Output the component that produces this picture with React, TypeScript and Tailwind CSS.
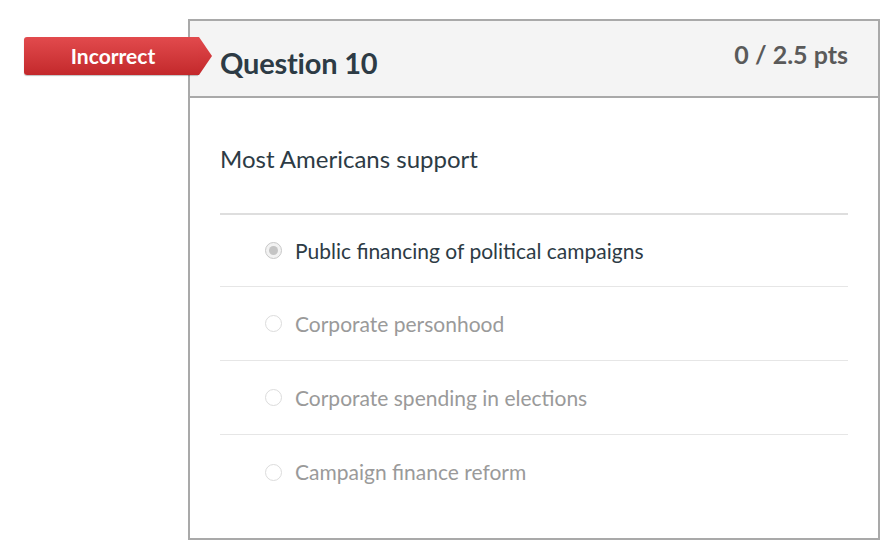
import React from 'react'

const answers = [
  { text: 'Public financing of political campaigns', selected: true },
  { text: 'Corporate personhood', selected: false },
  { text: 'Corporate spending in elections', selected: false },
  { text: 'Campaign finance reform', selected: false },
]

function Radio({ selected }: { selected: boolean }) {
  return (
    <span
      className={`w-[17px] h-[17px] rounded-full border flex items-center justify-center shrink-0 ${
        selected ? 'border-[#c8c8c8] bg-[#f2f2f2]' : 'border-[#dcdcdc] bg-white'
      }`}
    >
      {selected && <span className="w-[9px] h-[9px] rounded-full bg-[#c4c4c4]" />}
    </span>
  )
}

export default function App() {
  return (
    <div className="w-[880px] h-[540px] bg-white relative overflow-hidden" style={{ fontFamily: 'Lato, "Open Sans", sans-serif' }}>
      {/* Incorrect badge */}
      <div className="absolute left-[24px] top-[37px] flex h-[38px] z-10">
        <div className="w-[174px] h-full rounded-l-[3px] bg-gradient-to-b from-[#e24a4d] to-[#c3282b] text-white text-[21px] font-bold flex items-center justify-center pl-[4px] shadow-[0_1px_1px_rgba(0,0,0,0.25)]">
          Incorrect
        </div>
        <svg width="14" height="38" viewBox="0 0 14 38" className="block">
          <defs>
            <linearGradient id="bg" x1="0" y1="0" x2="0" y2="1">
              <stop offset="0" stopColor="#e24a4d" />
              <stop offset="1" stopColor="#c3282b" />
            </linearGradient>
          </defs>
          <polygon points="0,0 1,0 14,19 1,38 0,38" fill="url(#bg)" />
        </svg>
      </div>

      <div className="ml-[188px] mt-[19px] w-[692px] h-[521px] border-2 border-[#a9a9a9] flex flex-col">
        <div className="h-[77px] bg-[#f4f4f4] border-b-2 border-[#a9a9a9] flex justify-between px-[30px]">
          <h2 className="text-[29px] font-bold text-[#2d3b45] mt-[27px] leading-none tracking-[-0.2px]">Question 10</h2>
          <div className="text-[25px] font-bold text-[#5a5a5a] mt-[21px] leading-none">0 / 2.5 pts</div>
        </div>
        <div className="px-[30px]">
          <p className="text-[24px] text-[#2d3b45] mt-[49px] leading-none">Most Americans support</p>
          <div className="mt-[42px] border-t-2 border-[#dedede]">
            {answers.map((a, i) => (
              <div
                key={a.text}
                className={`flex items-center pl-[45px] gap-[13px] ${i === 0 ? 'h-[72px]' : 'h-[74px]'} ${i < answers.length - 1 ? 'border-b border-[#e6e6e6]' : ''}`}
              >
                <Radio selected={a.selected} />
                <span className={`text-[21px] ${a.selected ? 'text-[#2d3b45]' : 'text-[#9a9a9a]'}`}>{a.text}</span>
              </div>
            ))}
          </div>
        </div>
      </div>
    </div>
  )
}
